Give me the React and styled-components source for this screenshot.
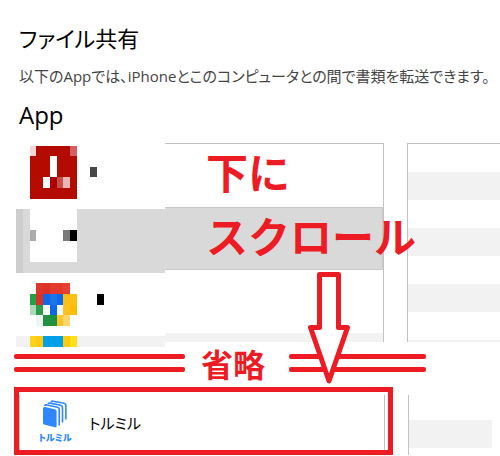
import React from 'react';
import styled, { createGlobalStyle, css } from 'styled-components';

const RED = '#ed1c24';

const GlobalStyle = createGlobalStyle`
  body {
    margin: 0;
    background: #fff;
    color: #000;
    font-family: 'Open Sans', 'Noto Sans CJK JP', sans-serif;
    font-feature-settings: 'palt';
  }
`;

const Page = styled.main`
  position: relative;
  overflow: hidden;
`;
const Header = styled.header`
  padding: 20px 0 0 19px;
`;
const Title = styled.h1`
  margin: 0;
  font-size: 22px;
  line-height: 36px;
  font-weight: 400;
`;
const Lead = styled.p`
  margin: 8px 0;
  font-size: 15px;
  line-height: 24px;
  font-weight: 400;
  color: #444;
  white-space: nowrap;
`;
const SubTitle = styled.h2`
  margin: 0;
  font-size: 24px;
  line-height: 38px;
  font-weight: 400;
`;

const Columns = styled.div`
  display: grid;
  grid-template-columns: 368px minmax(0, 1fr);
  column-gap: 23px;
  align-items: start;
  padding: 9px 0 0 16px;
`;
const AppList = styled.div`
  display: grid;
  grid-template-columns: 149px minmax(0, 1fr);
  align-items: start;
`;
const MaskedList = styled.ul`
  margin: 0;
  padding: 0;
  list-style-type: none;
`;
const MaskedRow = styled.li`
  box-sizing: border-box;
  height: ${props => props.$height}px;
  padding: ${props => props.$top || 0}px 0 0 14px;
  ${props => props.$selected && css`
    padding-left: 7px;
    border-left: 7px solid #cdcdcd;
    background: #d9d9d9;
  `}
  ${props => props.$striped && css`background: #f2f2f2;`}
  svg {
    display: block;
  }
`;
const ListBody = styled.div`
  border-top: 1px solid #c3c3c3;
  border-right: 1px solid #c3c3c3;
`;
const BodyRow = styled.div`
  box-sizing: border-box;
  height: ${props => props.$height}px;
  ${props => props.$selected && css`
    border: 1px solid #c9c9c9;
    border-left: none;
    background: #d9d9d9;
  `}
  ${props => props.$striped && css`background: #f2f2f2;`}
`;
const Documents = styled.div`
  border-left: 1px solid #c3c3c3;
  border-top: 1px solid #c3c3c3;
`;
const Stripe = styled.div`
  height: ${props => props.$height || 28}px;
  background: ${props => (props.$striped ? '#f2f2f2' : '#fff')};
`;

const Omitted = styled.div`
  display: flex;
  align-items: center;
  box-sizing: border-box;
  height: 40px;
  padding: 0 0 8px 14px;
`;
const DoubleRule = styled.div`
  box-sizing: border-box;
  width: ${props => props.$width}px;
  height: 18px;
  position: relative;
  &::before,
  &::after {
    content: '';
    position: absolute;
    left: 0;
    right: 0;
    height: 5px;
    border-radius: 2px;
    background: ${RED};
  }
  &::before {
    top: 0;
  }
  &::after {
    bottom: 0;
  }
`;
const Note = styled.span`
  font-family: 'Noto Sans CJK JP', sans-serif;
  font-feature-settings: normal;
  font-weight: 700;
  font-size: 32px;
  line-height: 32px;
  color: ${RED};
`;
const OmittedNote = styled(Note)`
  padding: 0 24px 0 16px;
`;
const ScrollNote = styled(Note)`
  position: absolute;
  left: 206px;
  top: 139px;
  font-size: 42px;
  line-height: 64px;
  white-space: nowrap;
`;
const Arrow = styled.svg`
  position: absolute;
  left: 306px;
  top: 270px;
`;

const Bottom = styled.div`
  display: grid;
  grid-template-columns: 379px minmax(0, 1fr);
  column-gap: 15px;
  padding-left: 14px;
`;
const Highlight = styled.div`
  border: 5px solid ${RED};
  padding: 3px 3px 0 0;
`;
const AppRow = styled.div`
  display: flex;
  align-items: center;
  gap: 16px;
  box-sizing: border-box;
  height: 55px;
  padding-left: 17px;
  border-left: 1px solid #c3c3c3;
  border-right: 1px solid #c3c3c3;
`;
const AppIcon = styled.div`
  display: flex;
  flex-direction: column;
  align-items: center;
  gap: 2px;
  width: 36px;
`;
const IconCaption = styled.span`
  font-size: 9px;
  line-height: 14px;
  font-weight: 900;
  color: #2f87ff;
  white-space: nowrap;
`;
const AppName = styled.span`
  font-size: 15px;
  line-height: 24px;
  font-weight: 400;
`;
const BottomDocuments = styled.div`
  margin: 8px 8px 0 0;
  height: 60px;
  border-left: 1px solid #c3c3c3;
`;

// x, y, width, height, colour
const adobeTiles = [
  [0, 0, 47, 53, '#b30b00'],
  [0, 0, 6, 10, '#f3d6d5'],
  [40, 0, 7, 10, '#d3605c'],
  [20, 10, 7, 21, '#fff'],
  [13, 31, 7, 11, '#fff'],
  [20, 31, 7, 11, '#ab0000'],
  [27, 31, 6, 11, '#ca4c47'],
  [33, 31, 7, 11, '#e8b6b4'],
  [60, 21, 7, 10, '#474747'],
];
const whiteTiles = [
  [0, 0, 47, 53, '#fff'],
  [0, 21, 6, 11, '#acacac'],
  [33, 21, 7, 11, '#7a777a'],
  [40, 21, 7, 11, '#000'],
];
const chromeTiles = [
  [6, 0, 7, 11, '#de352a'],
  [13, 0, 7, 11, '#dc3127'],
  [20, 0, 13, 11, '#e33a2e'],
  [33, 0, 7, 11, '#ea4033'],
  [0, 11, 6, 11, '#21a046'],
  [6, 11, 7, 11, '#da3025'],
  [13, 11, 7, 11, '#1267e4'],
  [20, 11, 7, 11, '#1b74e8'],
  [27, 11, 6, 11, '#0d69e8'],
  [33, 11, 14, 11, '#fcc015'],
  [0, 22, 6, 10, '#a9d9b7'],
  [6, 22, 7, 10, '#2c9e4b'],
  [20, 22, 7, 10, '#0b68e6'],
  [27, 22, 6, 10, '#f3f8fe'],
  [33, 22, 7, 10, '#fdc221'],
  [40, 22, 7, 10, '#fbbc05'],
  [6, 32, 7, 11, '#eaf6ee'],
  [13, 32, 14, 11, '#1f9140'],
  [27, 32, 6, 11, '#fec32d'],
  [33, 32, 7, 11, '#ffd768'],
  [67, 11, 7, 11, '#000'],
];
const lastTiles = [
  [0, 0, 6, 11, '#fed518'],
  [6, 0, 7, 11, '#fecb10'],
  [13, 0, 20, 11, '#03a0e9'],
  [33, 0, 7, 11, '#fecb10'],
  [40, 0, 7, 11, '#ffe010'],
];

const Mosaic = ({ tiles, height }) => (
  <svg width="80" height={height} shapeRendering="crispEdges" aria-hidden="true">
    {tiles.map(([x, y, w, h, fill], i) => (
      <rect key={i} x={x} y={y} width={w} height={h} fill={fill} />
    ))}
  </svg>
);

const BooksIcon = () => (
  <svg width="26" height="29" viewBox="0 0 26 29" fill="none" aria-hidden="true">
    <path d="M1 8.5 Q1 6.6 3 7 L13 9.2 Q14.6 9.6 14.6 11 V26 Q14.6 27.6 13 27.2 L2 24.6 Q1 24.2 1 23 Z" fill="#2f87ff" />
    <path
      d="M2.5 5.8 Q3.2 4.6 5 5 L15.5 7.2 Q17.2 7.6 17.2 9.2 V25.5 M6 3.8 Q6.7 2.8 8.2 3.1 L18.6 5.2 Q20.5 5.6 20.5 7.4 V22.5 M9 1.9 Q9.7 .9 11.2 1.2 L22 3.3 Q23.9 3.7 23.9 5.5 V19.5"
      stroke="#2f87ff"
      strokeWidth="1.6"
    />
  </svg>
);

const App = () => (
  <>
    <GlobalStyle />
    <Page>
      <Header>
        <Title>ファイル共有</Title>
        <Lead>以下のAppでは、iPhoneとこのコンピュータとの間で書類を転送できます。</Lead>
        <SubTitle>App</SubTitle>
      </Header>

      <Columns>
        <AppList>
          <MaskedList>
            <MaskedRow $height={66} $top={3}><Mosaic tiles={adobeTiles} height={53} /></MaskedRow>
            <MaskedRow $height={64} $selected><Mosaic tiles={whiteTiles} height={53} /></MaskedRow>
            <MaskedRow $height={63} $top={10}><Mosaic tiles={chromeTiles} height={43} /></MaskedRow>
            <MaskedRow $height={11} $striped><Mosaic tiles={lastTiles} height={11} /></MaskedRow>
          </MaskedList>
          <ListBody>
            <BodyRow $height={63} />
            <BodyRow $height={63} $selected />
            <BodyRow $height={63} />
            <BodyRow $height={9} $striped />
          </ListBody>
        </AppList>
        <Documents>
          {[0, 1, 2, 3, 4, 5, 6].map(i => <Stripe key={i} $striped={i % 2 === 1} />)}
          <Stripe $striped $height={2} />
        </Documents>
      </Columns>

      <Omitted>
        <DoubleRule $width={171} />
        <OmittedNote>省略</OmittedNote>
        <DoubleRule $width={137} />
      </Omitted>

      <Bottom>
        <Highlight>
          <AppRow>
            <AppIcon>
              <BooksIcon />
              <IconCaption>トルミル</IconCaption>
            </AppIcon>
            <AppName>トルミル</AppName>
          </AppRow>
        </Highlight>
        <BottomDocuments>
          <Stripe $height={25} />
          <Stripe $striped />
        </BottomDocuments>
      </Bottom>

      <ScrollNote>下に<br />スクロール</ScrollNote>
      <Arrow width="46" height="116" viewBox="0 0 46 116" aria-hidden="true">
        <path
          d="M13.5 4.5 H32.5 V57.5 H41.5 L23 111 L4.5 57.5 H13.5 Z"
          fill="#fff"
          stroke={RED}
          strokeWidth="5"
          strokeLinejoin="round"
        />
      </Arrow>
    </Page>
  </>
);

export default App;
